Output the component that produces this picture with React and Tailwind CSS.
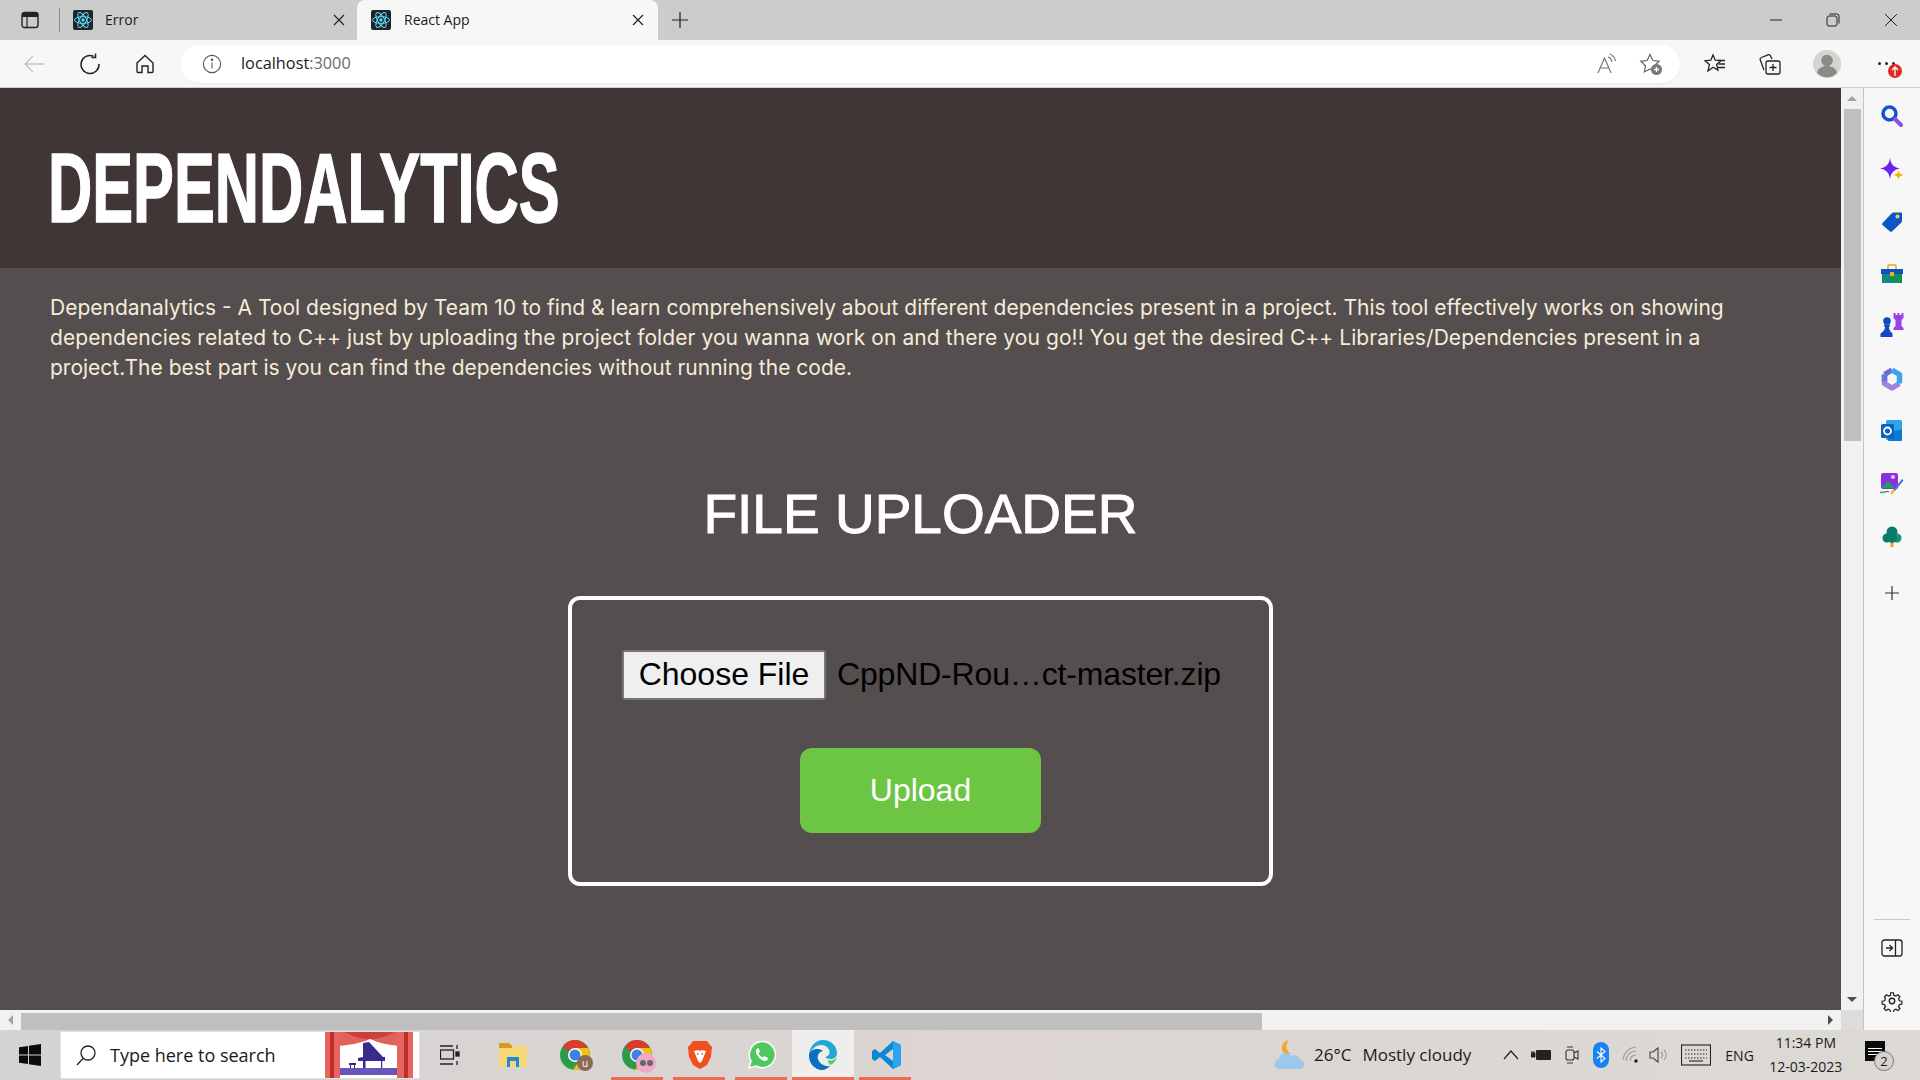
import React from "react";

// small dark square with the react atom, used for both tabs
function ReactFavicon() {
  return (
    <svg width="20" height="20" viewBox="0 0 20 20" className="shrink-0">
      <rect width="20" height="20" rx="2" fill="#20232a" />
      <g fill="none" stroke="#61dafb" strokeWidth="1">
        <ellipse cx="10" cy="10" rx="8.5" ry="3.4" />
        <ellipse cx="10" cy="10" rx="8.5" ry="3.4" transform="rotate(60 10 10)" />
        <ellipse cx="10" cy="10" rx="8.5" ry="3.4" transform="rotate(120 10 10)" />
      </g>
      <circle cx="10" cy="10" r="1.7" fill="#61dafb" />
    </svg>
  );
}

function CloseX() {
  return (
    <svg width="12" height="12" viewBox="0 0 12 12" stroke="#222" strokeWidth="1.2">
      <path d="M1 1l10 10M11 1L1 11" />
    </svg>
  );
}

function TabBar() {
  return (
    <div className="flex h-10 items-end bg-[#cccccc] text-[14px] text-[#1a1a1a]">
      <div className="flex h-10 w-[59px] items-center justify-center pl-[1px]">
        <svg width="18" height="18" viewBox="0 0 18 18">
          <rect x="1" y="1.5" width="16" height="15" rx="2.5" fill="none" stroke="#222" strokeWidth="1.4" />
          <path d="M1 3.5a2 2 0 0 1 2-2h12a2 2 0 0 1 2 2V6H1z" fill="#222" />
          <path d="M6 6v10" stroke="#222" strokeWidth="1.2" />
        </svg>
      </div>
      <div className="mb-2 h-6 w-px bg-[#8a8a8a]" />
      <div className="flex h-10 w-[297px] items-center pb-[1px] pl-[13px]">
        <ReactFavicon />
        <span className="ml-3">Error</span>
        <span className="ml-auto mr-[12px] flex"><CloseX /></span>
      </div>
      <div className="flex h-10 w-[301px] items-center rounded-t-lg bg-[#f7f7f7] pb-[1px] pl-[14px]">
        <ReactFavicon />
        <span className="ml-[13px]">React App</span>
        <span className="ml-auto mr-[14px] flex"><CloseX /></span>
      </div>
      <div className="flex h-10 w-[44px] items-center justify-center">
        <svg width="18" height="18" viewBox="0 0 18 18" stroke="#222" strokeWidth="1.2">
          <path d="M9 1v16M1 9h16" />
        </svg>
      </div>
      <div className="ml-auto flex h-10 items-center">
        <div className="flex w-[58px] justify-center pl-[2px]">
          <svg width="14" height="14" viewBox="0 0 14 14" stroke="#222"><path d="M1 7h12" /></svg>
        </div>
        <div className="flex w-[58px] justify-center">
          <svg width="14" height="14" viewBox="0 0 14 14" fill="none" stroke="#222">
            <rect x="1" y="3" width="10" height="10" rx="2" />
            <path d="M3.5 1h7.5a2 2 0 0 1 2 2v7.5" />
          </svg>
        </div>
        <div className="flex w-[58px] justify-center">
          <svg width="14" height="14" viewBox="0 0 14 14" stroke="#222"><path d="M1 1l12 12M13 1L1 13" /></svg>
        </div>
      </div>
    </div>
  );
}

function ToolBar() {
  return (
    <div className="flex h-12 items-center border-b border-[#cfcfcf] bg-[#f7f7f7] pl-[6px]">
      <div className="flex w-[56px] justify-center">
        <svg width="22" height="22" viewBox="0 0 22 22" fill="none" stroke="#c4c4c4" strokeWidth="1.4">
          <path d="M21 11H2M10 3l-8 8 8 8" />
        </svg>
      </div>
      <div className="flex w-[56px] justify-center">
        <svg width="22" height="22" viewBox="0 0 22 22" fill="none" stroke="#222" strokeWidth="1.5">
          <path d="M14.5 3.2A9 9 0 1 0 20 11" />
          <path d="M14.5 0.5v4h-4" transform="translate(2 0)" />
        </svg>
      </div>
      <div className="flex w-[54px] justify-center">
        <svg width="20" height="20" viewBox="0 0 20 20" fill="none" stroke="#222" strokeWidth="1.4">
          <path d="M2 9l8-7.5L18 9v8.5a1 1 0 0 1-1 1h-4v-6.5H7v6.5H3a1 1 0 0 1-1-1z" />
        </svg>
      </div>
      <div className="ml-[8px] flex h-[38px] w-[1500px] items-center rounded-full bg-white pl-[22px] pr-[17px] shadow-[0_1px_3px_rgba(0,0,0,0.06)]">
        <svg width="20" height="20" viewBox="0 0 20 20" fill="none" stroke="#555" strokeWidth="1.1">
          <circle cx="10" cy="10" r="8.6" />
          <path d="M10 8.6v6" />
          <circle cx="10" cy="5.8" r="0.7" fill="#555" />
        </svg>
        <span className="ml-[19px] text-[16.3px] text-[#1a1a1a]">
          localhost<span className="text-[#6b6b6b]">:3000</span>
        </span>
        <div className="ml-auto flex items-center gap-[21px]">
          <svg width="22" height="22" viewBox="0 0 22 22" fill="none" stroke="#777" strokeWidth="1.2">
            <path d="M2 20L8.5 5 15 20M4.500 15h8" />
            <path d="M12 4a6 6 0 0 1 4 5M13.500 1a9 9 0 0 1 6 7" />
          </svg>
          <svg width="24" height="24" viewBox="0 0 24 24" fill="none">
            <path d="M11 2.500l2.800 6 6.400.8-4.700 4.400 1.200 6.300L11 17l-5.700 3 1.200-6.300L1.800 9.300l6.400-.8z" stroke="#666" strokeWidth="1.2" />
            <circle cx="17.500" cy="17.500" r="5.500" fill="#777" />
            <path d="M17.500 15v5M15 17.500h5" stroke="#fff" strokeWidth="1.3" />
          </svg>
        </div>
      </div>
      <div className="ml-[7px] flex w-[56px] justify-center">
        <svg width="22" height="22" viewBox="0 0 22 22" fill="none" stroke="#222" strokeWidth="1.3">
          <path d="M9 2l2.200 5.200 5.800.5-4.400 3.800 1.300 5.600L9 14.200 4 18l1.400-6.400L1 7.700l5.800-.5z" />
          <path d="M14 7.500h7M14.500 11h6.500M13.500 14.500h7.500" />
        </svg>
      </div>
      <div className="flex w-[54px] justify-center">
        <svg width="22" height="22" viewBox="0 0 22 22" fill="none" stroke="#222" strokeWidth="1.3">
          <rect x="7" y="8" width="14" height="13" rx="2" />
          <path d="M14 11v7M10.500 14.500h7" />
          <path d="M5 17L1.300 7a2 2 0 0 1 1.200-2.500L9 1.800a2 2 0 0 1 2.600 1.200L13 6" />
        </svg>
      </div>
      <div className="flex w-[60px] justify-center">
        <svg width="28" height="28" viewBox="0 0 28 28">
          <circle cx="14" cy="14" r="14" fill="#d6d4d0" />
          <circle cx="14" cy="10.500" r="5.800" fill="#8c8a87" />
          <path d="M4 23c1-5 5-7 10-7s9 2 10 7a14 14 0 0 1-20 0z" fill="#8c8a87" />
        </svg>
      </div>
      <div className="relative flex w-[55px] justify-center pl-[3px]">
        <div className="flex gap-[4px]">
          <span className="h-[3px] w-[3px] rounded-full bg-[#222]" />
          <span className="h-[3px] w-[3px] rounded-full bg-[#222]" />
          <span className="h-[3px] w-[3px] rounded-full bg-[#222]" />
        </div>
        <div className="absolute left-[31px] top-[2px] flex h-[14px] w-[14px] items-center justify-center rounded-full bg-[#e02b20]">
          <svg width="8" height="10" viewBox="0 0 8 10" fill="none" stroke="#fff" strokeWidth="1.3">
            <path d="M4 10V1M1 4l3-3 3 3" />
          </svg>
        </div>
      </div>
    </div>
  );
}

function VScroll() {
  return (
    <div className="flex w-[22px] flex-col items-center bg-[#f1f1f1]">
      <div className="flex h-[21px] items-center justify-center">
        <div className="h-0 w-0 border-x-[5px] border-b-[5px] border-x-transparent border-b-[#a3a3a3]" />
      </div>
      <div className="h-[332px] w-[17px] bg-[#bfbfbf]" />
      <div className="mt-auto flex h-[22px] items-center justify-center">
        <div className="h-0 w-0 border-x-[5px] border-t-[5px] border-x-transparent border-t-[#505050]" />
      </div>
    </div>
  );
}

function HScroll() {
  return (
    <div className="flex h-5 items-center bg-[#f1f1f1]">
      <div className="flex h-5 w-[21px] items-center justify-center">
        <div className="h-0 w-0 border-y-[5px] border-r-[5px] border-y-transparent border-r-[#a3a3a3]" />
      </div>
      <div className="mt-[2px] h-[17px] w-[1241px] bg-[#bfbfbf]" />
      <div className="flex h-5 w-[579px] items-center justify-end pr-[8px]">
        <div className="h-0 w-0 border-y-[5px] border-l-[5px] border-y-transparent border-l-[#505050]" />
      </div>
      <div className="h-5 w-[22px] bg-[#dcdcdc]" />
    </div>
  );
}

function Page() {
  return (
    <div className="w-[1841px] overflow-hidden bg-[#544e4e]">
      <header className="flex h-[180px] items-center bg-[#403636] pl-[48px] pt-[20px]">
        <h1 className="origin-left scale-x-[0.625] whitespace-nowrap font-['Liberation_Sans',sans-serif] text-[98px] font-bold leading-none text-white [-webkit-text-stroke:1.5px_#ffffff]">
          DEPENDALYTICS
        </h1>
      </header>
      <p className="whitespace-nowrap pl-[50px] pt-[25px] font-['Inter',sans-serif] text-[21px] leading-[30px] text-[#f5ecd9]">
        Dependanalytics - A Tool designed by Team 10 to find &amp; learn comprehensively about different dependencies present in a project. This tool effectively works on showing
        <br />
        <span className="tracking-[0.07px]">
          dependencies related to C++ just by uploading the project folder you wanna work on and there you go!! You get the desired C++ Libraries/Dependencies present in a
        </span>
        <br />
        project.The best part is you can find the dependencies without running the code.
      </p>
      <h2 className="mt-[99px] text-center font-['Liberation_Sans',sans-serif] text-[55px] font-normal leading-[64px] text-white [-webkit-text-stroke:1px_#ffffff]">
        FILE UPLOADER
      </h2>
      <div className="mx-auto mt-[50px] h-[290px] w-[705px] rounded-[12px] border-4 border-white pl-[50px] pt-[50px] font-['Liberation_Sans',sans-serif]">
        <div className="flex items-center">
          <button className="h-[50px] w-[204px] rounded-[3px] border-2 border-[#767676] bg-[#efefef] pb-[3px] text-[32px] leading-[36px] text-black">
            Choose File
          </button>
          <span className="mb-[2px] ml-[11px] text-[32px] tracking-[-0.16px] text-black">CppND-Rou…ct-master.zip</span>
        </div>
        <button className="ml-[178px] mt-[48px] flex h-[85px] w-[241px] items-center justify-center rounded-[12px] bg-[#6cc644] pb-[2px] text-[32px] text-white">
          Upload
        </button>
      </div>
    </div>
  );
}

function SideIcon({ children, mt = "" }) {
  return <div className={`flex h-[24px] w-full items-center justify-center ${mt}`}>{children}</div>;
}

function Sidebar() {
  return (
    <div className="flex w-[57px] flex-col items-center border-l border-[#c4c4c4] bg-[#f7f7f7] pt-[16px]">
      <SideIcon>
        <svg width="24" height="24" viewBox="0 0 24 24" fill="none">
          <circle cx="9.500" cy="9.500" r="6.500" stroke="#0f56c9" strokeWidth="3.500" />
          <path d="M15 15l6 6" stroke="#8a4de8" strokeWidth="4" strokeLinecap="round" />
        </svg>
      </SideIcon>
      <SideIcon mt="mt-[30px]">
        <svg width="24" height="24" viewBox="0 0 24 24">
          <path d="M10 0c1 6.500 3.500 9 10 10.500-6.500 1.500-9 4-10 10.500-1-6.500-3.500-9-10-10.500 6.500-1.500 9-4 10-10.500z" fill="#6a22f0" />
          <path d="M18.500 12c.5 3 1.500 4 5 5-3.500 1-4.500 2-5 5-.5-3-1.500-4-5-5 3.500-1 4.500-2 5-5z" fill="#f5b50f" />
        </svg>
      </SideIcon>
      <SideIcon mt="mt-[28px]">
        <svg width="22" height="22" viewBox="0 0 22 22">
          <path d="M1.500 12L11 2a2 2 0 0 1 1.500-.5H20a1 1 0 0 1 1 1V10a2 2 0 0 1-.6 1.400L11 20.500a1.500 1.500 0 0 1-2 0L1.500 14a1.500 1.500 0 0 1 0-2z" fill="#0b57c9" />
          <circle cx="16.500" cy="5.500" r="2" fill="#f7c948" />
        </svg>
      </SideIcon>
      <SideIcon mt="mt-[28px]">
        <svg width="22" height="20" viewBox="0 0 22 20">
          <path d="M7 5V2a1 1 0 0 1 1-1h6a1 1 0 0 1 1 1v3" fill="none" stroke="#e8a81d" strokeWidth="1.600" />
          <rect x="0" y="5" width="22" height="5" fill="#0f4fc0" />
          <rect x="1" y="10" width="20" height="9" fill="#0f8a7d" />
          <rect x="11" y="10" width="10" height="9" fill="#0e9157" />
          <rect x="9" y="8" width="4" height="4" fill="#f2b01e" />
        </svg>
      </SideIcon>
      <SideIcon mt="mt-[27px]">
        <svg width="24" height="24" viewBox="0 0 24 24">
          <path d="M13.500 0h2v2h2V0h2v2h2V0h2v5l-2 2v6l2 2v2h-10v-2l2-2V7l-2-2z" fill="#9b3fe8" />
          <circle cx="7" cy="8" r="3.800" fill="#1248c4" />
          <path d="M4 11.500h6v1.500l-1 1c0 3 1.500 5 3.500 6.500v3.500H.5v-3.500C3 19 5 17 5 14l-1-1z" fill="#1248c4" />
        </svg>
      </SideIcon>
      <SideIcon mt="mt-[30px]">
        <svg width="22" height="24" viewBox="0 0 22 24" fill="none" strokeWidth="5.500" strokeLinejoin="round">
          <path d="M3.500 7.500v9l7.500 4.500 7.500-4.500" stroke="#a583dd" />
          <path d="M3.500 7.500L11 3" stroke="#5f6fdb" />
          <path d="M3.500 7.500v7" stroke="#6b74dc" />
          <path d="M11 3l7.500 4.500v9" stroke="#39a5ee" />
        </svg>
      </SideIcon>
      <SideIcon mt="mt-[28px]">
        <svg width="22" height="22" viewBox="0 0 22 22">
          <rect x="5" y="0" width="16" height="20" rx="1.500" fill="#2aa4ea" />
          <path d="M7 13l14-4v11a1 1 0 0 1-1 1H8a1 1 0 0 1-1-1z" fill="#0f78d4" />
          <rect x="0" y="4" width="13" height="14" rx="1.500" fill="#0b63c0" />
          <circle cx="6.500" cy="11" r="3.500" fill="none" stroke="#fff" strokeWidth="1.800" />
        </svg>
      </SideIcon>
      <SideIcon mt="mt-[29px]">
        <svg width="24" height="24" viewBox="0 0 24 24">
          <rect x="1" y="1" width="17" height="16" rx="2" fill="#8d2fe0" />
          <circle cx="13" cy="5" r="2" fill="#e8c6ff" />
          <path d="M2 15l6-6 7 7H2z" fill="#22a05a" />
          <path d="M13 18l9-11 1.500 1.500L15 19z" fill="#4d6fe0" />
          <path d="M12 18l2.500 1-2 3-2.500-.5z" fill="#f5b50f" />
          <path d="M0 21c2-2 3 0 5-1s2-1 4 0" fill="none" stroke="#1e9b52" strokeWidth="1.300" />
        </svg>
      </SideIcon>
      <SideIcon mt="mt-[29px]">
        <svg width="20" height="22" viewBox="0 0 20 22">
          <rect x="8.500" y="16" width="3" height="5" fill="#f2a20c" />
          <circle cx="10" cy="6" r="5.500" fill="#0c7a6a" />
          <circle cx="5" cy="12" r="4.500" fill="#0c7a6a" />
          <circle cx="15" cy="12" r="4.500" fill="#14957d" />
          <circle cx="10" cy="12" r="5" fill="#0c7a6a" />
        </svg>
      </SideIcon>
      <SideIcon mt="mt-[32px]">
        <svg width="16" height="16" viewBox="0 0 16 16" stroke="#333" strokeWidth="1.200"><path d="M8 1v14M1 8h14" /></svg>
      </SideIcon>
      <div className="mt-auto h-px w-[36px] bg-[#c8c8c8]" />
      <SideIcon mt="mt-[16px]">
        <svg width="22" height="18" viewBox="0 0 22 18" fill="none" stroke="#222" strokeWidth="1.300">
          <rect x="1" y="1" width="20" height="16" rx="2.500" />
          <path d="M14.500 1v16M5 9h6M8.500 6L11.500 9l-3 3" />
        </svg>
      </SideIcon>
      <SideIcon mt="mt-[29px]">
        <svg width="22" height="22" viewBox="0 0 24 24" fill="none" stroke="#222" strokeWidth="1.500">
          <circle cx="12" cy="12" r="3" />
          <path d="M10.300 2h3.400l.6 3 2.300 1 2.600-1.600 2.400 2.400-1.600 2.600 1 2.300 3 .6v3.400l-3 .6-1 2.300 1.600 2.600-2.400 2.400-2.600-1.600-2.300 1-.6 3h-3.400l-.6-3-2.300-1-2.600 1.600-2.400-2.400 1.600-2.600-1-2.300-3-.6v-3.400l3-.6 1-2.300L3 6.800l2.400-2.400 2.600 1.600 2.300-1z" transform="translate(1.200 1.200) scale(.9)" />
        </svg>
      </SideIcon>
      <div className="h-[17px]" />
    </div>
  );
}

// curtain and piano thumbnail at the right end of the search box
function PianoThumb() {
  return (
    <svg width="98" height="48" viewBox="0 0 98 48" className="shrink-0">
      <rect width="98" height="48" fill="#ffffff" />
      <rect x="19" y="37" width="57" height="7" fill="#6a55b8" />
      <path d="M16 0h62v15C68 14 58 12 49 8 40 12 28 14 18 15z" fill="#e0605b" />
      <path d="M22 0c8 5 18 8 27 8 9 0 18-3 26-8z" fill="#c9403c" />
      <rect x="4" y="0" width="15" height="47" fill="#e8655f" />
      <rect x="9" y="0" width="4" height="47" fill="#bb2f2c" />
      <rect x="76" y="0" width="16" height="47" fill="#e8655f" />
      <rect x="83" y="0" width="4" height="47" fill="#bb2f2c" />
      <path d="M42 12l6-1 14 15h2v4H37v-3l5-1z" fill="#3a2a8c" />
      <rect x="42" y="30" width="2.500" height="7" fill="#3a2a8c" />
      <rect x="60" y="30" width="1.200" height="7" fill="#3a2a8c" />
      <rect x="28" y="32" width="7" height="2" fill="#3a2a8c" />
      <rect x="29" y="34" width="1" height="3" fill="#3a2a8c" />
      <rect x="33" y="34" width="1" height="3" fill="#3a2a8c" />
    </svg>
  );
}

function ChromeIcon({ children }) {
  return (
    <div className="relative h-[30px] w-[30px]">
      <svg width="30" height="30" viewBox="0 0 30 30">
        <circle cx="15" cy="15" r="15" fill="#2c9c4b" />
        <path d="M3 6A15 15 0 0 1 28 7.500L15 8a7 7 0 0 0-6.500 4z" fill="#db3a2e" />
        <path d="M15 8h13A15 15 0 0 1 13 29.800L20.500 19z" fill="#f4c20d" />
        <circle cx="15" cy="15" r="7" fill="#fff" />
        <circle cx="15" cy="15" r="5.500" fill="#3b82e8" />
      </svg>
      {children}
    </div>
  );
}

function TaskSlot({ children, active, under }) {
  return (
    <div className={`relative flex h-[50px] w-[62px] items-center justify-center ${active ? "bg-[#f0eeed]" : ""}`}>
      {children}
      {under && (
        <div className={`absolute bottom-0 h-[3px] bg-[#ee6c52] ${active ? "inset-x-0" : "inset-x-[5px]"}`} />
      )}
    </div>
  );
}

function Taskbar() {
  return (
    <div className="flex h-[50px] items-center bg-gradient-to-r from-[#d3d3d3] via-[#dcd5d2] to-[#dcd9d5] text-[#1a1a1a]">
      <div className="flex w-[60px] justify-center">
        <svg width="22" height="22" viewBox="0 0 22 22" fill="#0b0b0b">
          <path d="M0 3.200l9-1.300V10.500H0zM10 1.700L22 0v10.500H10zM0 11.500h9v8.600l-9-1.300zM10 11.500h12V22l-12-1.700z" />
        </svg>
      </div>
      <div className="flex h-[48px] w-[360px] items-center overflow-hidden border border-[#e0e0e0] bg-white pl-[14px]">
        <svg width="22" height="22" viewBox="0 0 22 22" fill="none" stroke="#222" strokeWidth="1.300">
          <circle cx="13" cy="9" r="7" />
          <path d="M8 14.500L2 21" />
        </svg>
        <span className="ml-[13px] text-[18px]">Type here to search</span>
        <div className="ml-auto flex"><PianoThumb /></div>
      </div>
      <div className="flex w-[60px] justify-center">
        <svg width="20" height="22" viewBox="0 0 20 22" fill="none" stroke="#222" strokeWidth="1.300">
          <rect x="0.500" y="6" width="13" height="9" />
          <path d="M0 2h13M0 20h13M17 1v4M17 17v4" />
          <rect x="16" y="8" width="3" height="4" fill="#222" />
        </svg>
      </div>
      <div className="ml-[2px] flex">
        <TaskSlot>
          <svg width="28" height="24" viewBox="0 0 28 24">
            <path d="M0 3h28v21H0z" fill="#f8d775" />
            <path d="M0 1a1 1 0 0 1 1-1h9l3 3v2H0z" fill="#d69b1e" />
            <path d="M8 24v-10h12v10h-3v-6h-6v6z" fill="#1e8ad6" />
          </svg>
        </TaskSlot>
        <TaskSlot>
          <ChromeIcon>
            <div className="absolute bottom-[-1px] right-[-3px] flex h-[16px] w-[16px] items-center justify-center rounded-full bg-[#8b6b55] text-[10px] leading-none text-white">u</div>
          </ChromeIcon>
        </TaskSlot>
        <TaskSlot under>
          <ChromeIcon>
            <div className="absolute bottom-[-3px] right-[-4px] flex h-[20px] w-[20px] items-center justify-center gap-px rounded-full bg-[#f0a8c8]">
              <span className="h-[6px] w-[6px] rounded-full bg-[#666]" />
              <span className="h-[6px] w-[6px] rounded-full bg-[#666]" />
            </div>
          </ChromeIcon>
        </TaskSlot>
        <TaskSlot under>
          <svg className="ml-[2px]" width="26" height="30" viewBox="0 0 26 30">
            <path d="M6 1h14l3 4 2 2-1 10-4 8-7 4-7-4-4-8L1 7l2-2z" fill="#f1501e" />
            <path d="M7 11l4-1 2 1 2-1 4 1-2 5-2 5-2 2-2-2-2-5z" fill="#fff" />
            <path d="M10 14h1.500M14.500 14H16" stroke="#f1501e" strokeWidth="1.500" />
          </svg>
        </TaskSlot>
        <TaskSlot under>
          <svg className="ml-[2px]" width="30" height="30" viewBox="0 0 30 30">
            <path d="M2 28l2-7A13 13 0 1 1 9 26z" fill="#4fc85c" stroke="#fff" strokeWidth="1.500" />
            <path d="M10 8.500c-2 2-1.500 5 1.500 8.500s6.500 5 9 3l.5-2-3.500-2-1.500 1.500c-2-.8-3.500-2.500-4.500-4.500l1.500-1.500-1.500-3.500z" fill="#fff" />
          </svg>
        </TaskSlot>
        <TaskSlot active under>
          <svg width="32" height="30" viewBox="0 0 30 30">
            <path d="M1 14C2 6 8 0 15 0c8 0 14 6 14 13 0 4-3 6-6.500 6-3 0-5-1-5-2 3-1 4-3 4-5 0-4-4-7-8-7-5 0-9 3-12.500 9z" fill="#21a8d8" />
            <path d="M1 14c2-4 5-5 8-5 4 0 6 2 6 2-4 1-6 4-5 8s6 8 12 7c-2 2-5 4-8 4C7 30 0 23 1 14z" fill="#0c6fc0" />
            <path d="M22 25c3-1 6-4 7-8-2 3-6 4-9 3 0 2 1 4 2 5z" fill="#4fd25c" />
          </svg>
        </TaskSlot>
        <TaskSlot under>
          <svg className="ml-[4px]" width="32" height="30" viewBox="0 0 30 30">
            <path d="M21 1l8 4v20l-8 4L8 17l-5 4-3-2V11l3-2 5 4zM21 9l-8 6 8 6z" fill="#0f85d6" fillRule="evenodd" />
            <path d="M21 1l8 4v20l-8 4z" fill="#2aa5ec" />
          </svg>
        </TaskSlot>
      </div>
      <div className="ml-[359px] flex items-center">
        <svg width="30" height="30" viewBox="0 0 30 30">
          <path d="M14 0a8 8 0 0 0-6 12 8 8 0 0 0 8 2 9 9 0 0 1-2-14z" fill="#f4a72c" />
          <path d="M5 29a5 5 0 0 1-1-10 6.500 6.500 0 0 1 12-3 6 6 0 0 1 9 4 4.500 4.500 0 0 1 0 9z" fill="#9cc8ee" />
        </svg>
        <span className="ml-[9px] text-[17px]">26°C</span>
        <span className="ml-[11px] text-[17px]">Mostly cloudy</span>
      </div>
      <div className="ml-[32px] flex items-center">
        <svg width="16" height="10" viewBox="0 0 16 10" fill="none" stroke="#222" strokeWidth="1.200"><path d="M1 9l7-8 7 8" /></svg>
        <svg className="ml-[12px]" width="20" height="14" viewBox="0 0 20 14" fill="#222">
          <rect x="5" y="2" width="15" height="10" rx="1" />
          <path d="M0 5h4v4H0zM1 3v2M3 3v2" stroke="#222" />
        </svg>
        <svg className="ml-[14px]" width="14" height="20" viewBox="0 0 14 20" fill="none" stroke="#333" strokeWidth="1.100">
          <rect x="1" y="5" width="8" height="10" rx="2" />
          <path d="M9 8l4-2v8l-4-2M2 2h6M2 18h6" />
        </svg>
        <div className="ml-[14px] flex h-[26px] w-[16px] items-center justify-center rounded-[8px] bg-[#1a82f0]">
          <svg width="10" height="16" viewBox="0 0 10 16" fill="none" stroke="#fff" strokeWidth="1.100"><path d="M1 4.500l8 7L5 15V1l4 3.500-8 7" /></svg>
        </div>
        <svg className="ml-[13px]" width="18" height="18" viewBox="0 0 18 18" fill="none" stroke="#9a9a9a" strokeWidth="1.100">
          <path d="M1 14a14 14 0 0 1 13-13M4 15a10 10 0 0 1 10-10M8 15a6 6 0 0 1 6-6" />
          <circle cx="14" cy="15" r="1.800" fill="#222" stroke="none" />
        </svg>
        <svg className="ml-[9px]" width="22" height="18" viewBox="0 0 22 18" fill="none" stroke="#444" strokeWidth="1.100">
          <path d="M1 6h3l5-4v14l-5-4H1z" />
          <path d="M12 6a4 4 0 0 1 0 6M15 4a7 7 0 0 1 0 10" stroke="#999" />
        </svg>
        <svg className="ml-[10px]" width="30" height="22" viewBox="0 0 30 22" fill="none" stroke="#222" strokeWidth="1.100">
          <rect x="0.500" y="1" width="29" height="20" />
          <path d="M4 6h22M4 10h22M4 14h22" strokeDasharray="1.500 1.500" />
          <path d="M8 17h14" />
        </svg>
        <span className="ml-[14px] text-[14px]">ENG</span>
      </div>
      <div className="ml-[7px] flex w-[90px] flex-col items-center text-[14px] leading-[24px]">
        <span>11:34 PM</span>
        <span>12-03-2023</span>
      </div>
      <div className="relative ml-[12px] h-[30px] w-[30px]">
        <div className="absolute left-[2px] top-[1px] flex h-[20px] w-[20px] flex-col justify-center gap-[2px] bg-[#0b0b0b] px-[3px]">
          <span className="h-px bg-white" />
          <span className="h-px bg-white" />
          <span className="h-px bg-white" />
        </div>
        <div className="absolute left-[11px] top-[11px] flex h-[20px] w-[20px] items-center justify-center rounded-full border border-[#777] bg-[#d6d2ce] text-[13px] leading-none">2</div>
      </div>
    </div>
  );
}

export default function App() {
  return (
    <div className="flex h-[1080px] w-[1920px] flex-col overflow-hidden font-['Open_Sans',sans-serif]">
      <TabBar />
      <ToolBar />
      <div className="flex h-[942px]">
        <div className="flex w-[1863px] flex-col">
          <div className="flex h-[922px]">
            <Page />
            <VScroll />
          </div>
          <HScroll />
        </div>
        <Sidebar />
      </div>
      <Taskbar />
    </div>
  );
}
